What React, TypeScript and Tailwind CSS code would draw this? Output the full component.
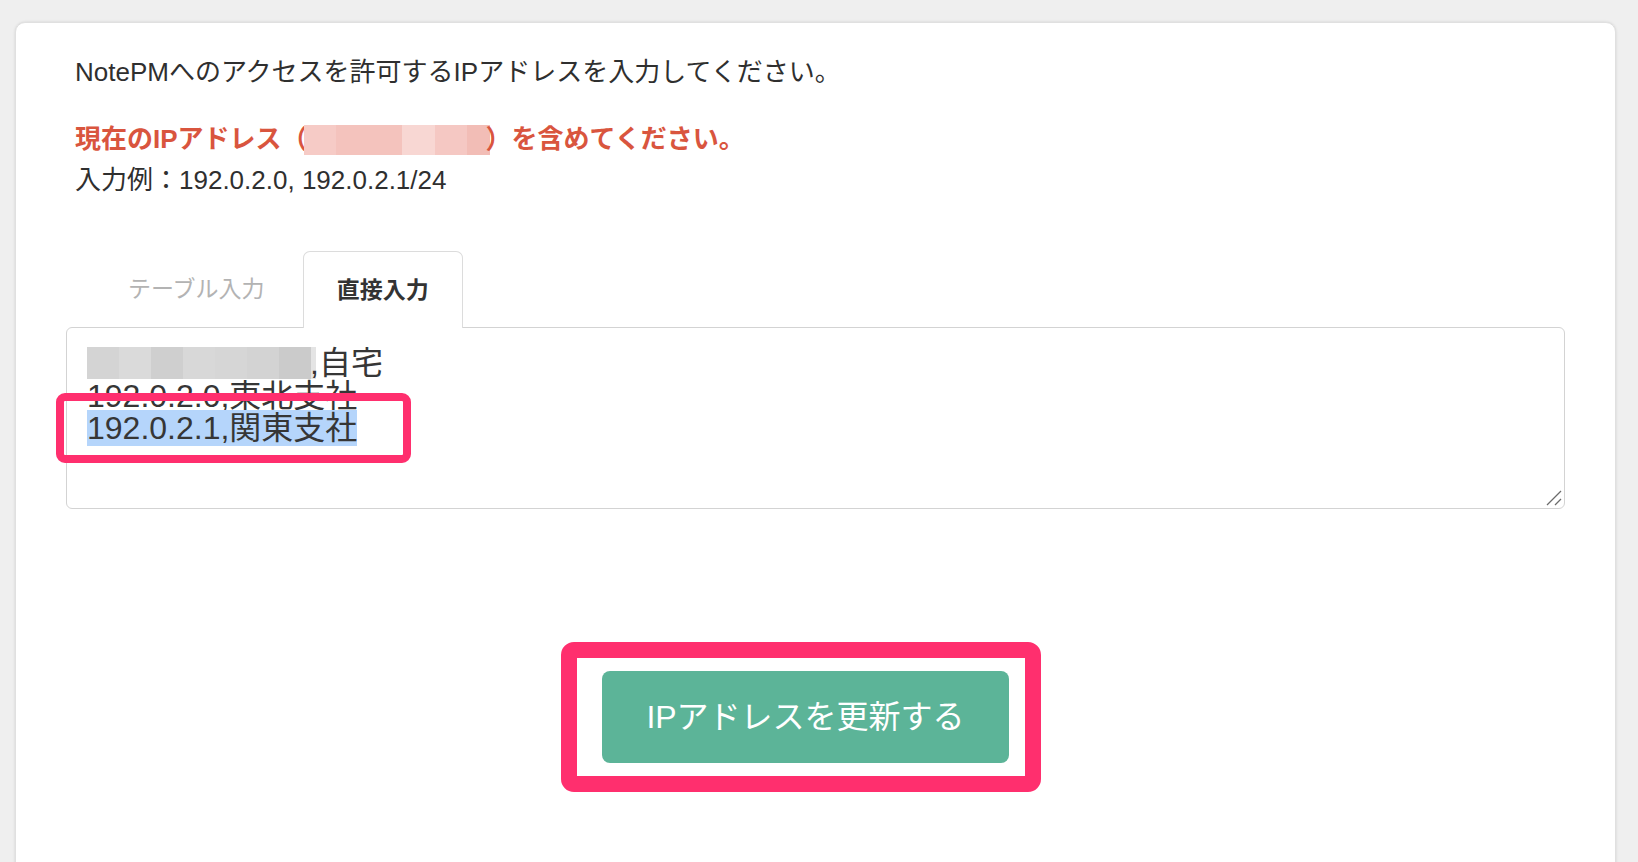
const grayBlocks = ["#d4d4d4", "#dadada", "#cfcfcf", "#d8d8d8", "#d6d6d6", "#d3d3d3", "#cbcbcb"];
const pinkBlocks = [
  { w: 32, c: "#f6cbc6" },
  { w: 66, c: "#f4c3bd" },
  { w: 33, c: "#f8d7d3" },
  { w: 32, c: "#f5c8c3" },
  { w: 23, c: "#f2bdb6" },
];

function ResizeHandle() {
  return (
    <svg className="absolute right-[2px] bottom-[2px]" width="16" height="16" viewBox="0 0 16 16">
      <line x1="1" y1="15" x2="15" y2="1" stroke="#6b6b6b" strokeWidth="1.3" />
      <line x1="9" y1="15" x2="15" y2="9" stroke="#6b6b6b" strokeWidth="1.3" />
    </svg>
  );
}

export default function App() {
  return (
    <div
      className="h-screen overflow-hidden bg-[#efefef] pl-[15px] pr-[22px] pt-[22px]"
      style={{ fontFamily: '"Liberation Sans", "Noto Sans CJK JP", sans-serif' }}
    >
      <div className="h-[900px] rounded-[10px] border border-[#e0e0e0] bg-white px-[50px] pt-[29px] shadow-[0_0_3px_rgba(0,0,0,0.12)]">
        {/* Description */}
        <div className="pl-[9px] text-[26px] leading-[41px] text-[#2f2f2f]">
          <p>NotePMへのアクセスを許可するIPアドレスを入力してください。</p>
          <p className="mt-[26px] flex items-center font-bold text-[#d9553e]">
            <span>現在のIPアドレス（</span>
            <span className="-mx-[4px] flex h-[30px]">
              {pinkBlocks.map((b, i) => (
                <span key={i} className="h-full" style={{ width: b.w, backgroundColor: b.c }} />
              ))}
            </span>
            <span>）を含めてください。</span>
          </p>
          <p>入力例：192.0.2.0, 192.0.2.1/24</p>
        </div>

        {/* Tabs */}
        <div className="mt-[50px] flex gap-[5px] pl-[29px]">
          <div className="flex h-[76px] items-center px-[33px] text-[23px] text-[#b3b3b3]">テーブル入力</div>
          <div className="relative z-10 -mb-px flex h-[77px] items-center rounded-t-[7px] border border-b-0 border-[#dcdcdc] bg-white px-[33px] text-[23px] font-bold text-[#333]">
            直接入力
          </div>
        </div>

        {/* Textarea */}
        <div className="relative h-[182px] rounded-[6px] border border-[#d3d3d3] bg-white px-[20px] pt-[19px] text-[32px] leading-[32.5px] text-[#363636]">
          <div className="flex items-center">
            <span className="flex h-[32px]">
              {grayBlocks.map((c, i) => (
                <span key={i} className="h-full w-[32px]" style={{ backgroundColor: c }} />
              ))}
              <span className="h-full w-[5px] bg-[#e4e4e4]" />
            </span>
            <span className="-ml-[6px]">,自宅</span>
          </div>
          <div>192.0.2.0,東北支社</div>
          <div>
            <span className="bg-[#b5d5fb]">192.0.2.1,関東支社</span>
          </div>
          <div className="absolute left-[-11px] top-[65px] h-[70px] w-[355px] rounded-[9px] border-[8px] border-[#ff2f6e]" />
          <ResizeHandle />
        </div>

        {/* Submit */}
        <div className="mt-[133px] flex justify-center pr-[29px]">
          <div className="rounded-[13px] border-[16px] border-[#ff2f6e] pb-[13px] pl-[25px] pr-[16px] pt-[13px]">
            <button className="flex h-[92px] w-[407px] items-center justify-center rounded-[8px] bg-[#5cb498] text-[32px] text-white">
              IPアドレスを更新する
            </button>
          </div>
        </div>
      </div>
    </div>
  );
}
